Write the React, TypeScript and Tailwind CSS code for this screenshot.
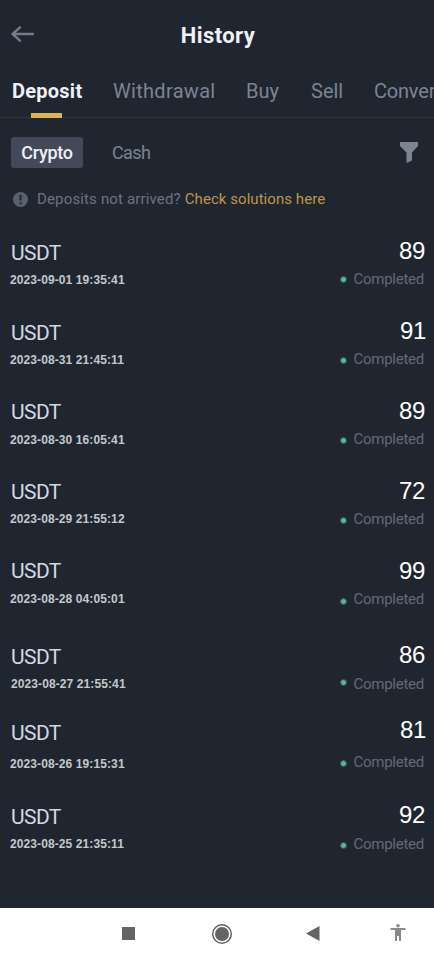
import clsx from 'clsx';

interface Deposit {
  date: string;
  amount: string;
  row: string;
  dateGap: string;
  amountPad: string;
  statusGap: string;
  dot: string;
}

const deposits: Deposit[] = [
  { date: '2023-09-01 19:35:41', amount: '89', row: 'h-[80px]', dateGap: 'mt-[7px]', amountPad: 'pt-[1px]', statusGap: 'mt-[6px]', dot: 'mt-[1px]' },
  { date: '2023-08-31 21:45:11', amount: '91', row: 'h-[79px]', dateGap: 'mt-[7px]', amountPad: 'pt-[1px] -mr-px', statusGap: 'mt-[6px] mr-px', dot: 'mt-[2px]' },
  { date: '2023-08-30 16:05:41', amount: '89', row: 'h-[80px]', dateGap: 'mt-[8px]', amountPad: 'pt-[2px]', statusGap: 'mt-[6px]', dot: 'mt-[2px]' },
  { date: '2023-08-29 21:55:12', amount: '72', row: 'h-[79px]', dateGap: 'mt-[7px]', amountPad: 'pt-[2px]', statusGap: 'mt-[6px]', dot: 'mt-[2px]' },
  { date: '2023-08-28 04:05:01', amount: '99', row: 'h-[86px]', dateGap: 'mt-[8px]', amountPad: 'pt-[3px]', statusGap: 'mt-[6px]', dot: 'mt-[4px]' },
  { date: '2023-08-27 21:55:41', amount: '86', row: 'h-[76px]', dateGap: 'mt-[7px] ml-px', amountPad: 'pt-[1px]', statusGap: 'mt-[7px]', dot: '-mt-[3px]' },
  { date: '2023-08-26 19:15:31', amount: '81', row: 'h-[84px]', dateGap: 'mt-[11px]', amountPad: 'pt-0 -mr-px', statusGap: 'mt-[10px] mr-px', dot: 'mt-[3px]' },
  { date: '2023-08-25 21:35:11', amount: '92', row: 'h-[108px]', dateGap: 'mt-[7px]', amountPad: 'pt-[1px]', statusGap: 'mt-[7px]', dot: 'mt-[2px]' },
];

const tabs = [
  { label: 'Deposit', className: 'w-[101px] font-bold text-[#eff1f6] tracking-[0.25px]' },
  { label: 'Withdrawal', className: 'w-[133px] text-[#7c8494] tracking-[0.3px]' },
  { label: 'Buy', className: 'w-[65px] text-[#7c8494]' },
  { label: 'Sell', className: 'w-[63px] text-[#7c8494]' },
  { label: 'Conver', className: 'text-[#7c8494] -tracking-[0.2px]' },
];

function DepositRow({ deposit }: { deposit: Deposit }) {
  return (
    <div className={clsx('flex justify-between px-[10px]', deposit.row)}>
      <div className="flex flex-col pt-[5px]">
        <span className="ml-px text-[21px] leading-6 tracking-[-0.6px] text-[#d3d7e4]">USDT</span>
        <span
          className={clsx(
            '[font-family:Liberation_Sans,Arial,sans-serif] text-[12px] leading-4 font-bold tracking-[0.1px] whitespace-nowrap text-[#c3c8cb]',
            deposit.dateGap
          )}
        >
          {deposit.date}
        </span>
      </div>
      <div className={clsx('flex flex-col items-end', deposit.amountPad)}>
        <span className="-mr-px [font-family:Liberation_Sans,Arial,sans-serif] text-[24px] leading-7 tracking-[-0.4px] text-white">
          {deposit.amount}
        </span>
        <div className={clsx('flex h-4 items-center gap-[6px]', deposit.statusGap)}>
          <span className={clsx('size-[7px] rounded-full border border-[#245c50] bg-[#66ac9c]', deposit.dot)} />
          <span className="text-[15px] leading-4 tracking-[-0.25px] text-[#626976]">Completed</span>
        </div>
      </div>
    </div>
  );
}

export default function App() {
  return (
    <div className="flex h-[959px] w-[434px] flex-col overflow-hidden bg-[#202630] font-[Roboto,sans-serif]">
      <header className="grid h-[70px] grid-cols-[1fr_auto_1fr] items-center pl-[10px] pr-[8px]">
        <svg width="24" height="18" viewBox="0 0 24 18" fill="none" stroke="#757c89" strokeWidth="2.4" strokeLinecap="round" strokeLinejoin="round" className="-mt-[3px]">
          <path d="M10 2.300 2.600 9l7.400 6.700M3 9h20" />
        </svg>
        <h1 className="pt-px text-[22px] leading-7 font-bold tracking-[0.4px] text-[#eff1f6]">History</h1>
      </header>

      <nav className="flex h-[48px] shrink-0 flex-col justify-between border-b border-[#2c3440] pl-[11px]">
        <div className="ml-px flex pt-[9px] text-[20px] leading-6 whitespace-nowrap">
          {tabs.map((tab) => (
            <span key={tab.label} className={clsx('shrink-0', tab.className)}>
              {tab.label}
            </span>
          ))}
        </div>
        <div className="-mb-px ml-5 h-[5px] w-[31px] bg-[#dcb455]" />
      </nav>

      <div className="flex h-[68px] items-center pr-[16px] pl-[11px]">
        <button className="h-[31px] w-[72px] rounded-[3px] bg-[#434958] pt-px text-[18px] font-medium tracking-[-0.3px] text-[#eff1f6]">
          Crypto
        </button>
        <span className="ml-[29px] pt-px text-[18px] tracking-[-0.6px] text-[#7c8494]">Cash</span>
        <svg width="18" height="21" viewBox="0 0 18 21" fill="#7c8494" className="ml-auto">
          <path d="M0 0h18v4l-6 6.5v8L6.5 21V10.500L0 4z" />
        </svg>
      </div>

      <div className="flex h-[26px] items-center pl-[13px] text-[15px] whitespace-nowrap text-[#6c7380]">
        <svg width="15" height="15" viewBox="0 0 15 15" className="mr-[9px]">
          <circle cx="7.5" cy="7.5" r="7.5" fill="#596070" />
          <path d="M7.5 3v5.5M7.5 10.2v2" stroke="#202630" strokeWidth="2" />
        </svg>
        <span className="tracking-[0.15px]">Deposits not arrived?</span>
        <a className="ml-[4px] tracking-[0.05px] text-[#bf9549]">Check solutions here</a>
      </div>

      <main className="flex flex-1 flex-col pt-[24px]">
        {deposits.map((deposit) => (
          <DepositRow key={deposit.date} deposit={deposit} />
        ))}
      </main>

      <footer className="flex h-[51px] shrink-0 items-center bg-white pl-[122px]">
        <div className="size-[13px] bg-[#646464]" />
        <svg width="22" height="22" viewBox="0 0 22 22" className="ml-[76px]">
          <circle cx="11" cy="11" r="9.3" fill="none" stroke="#646464" strokeWidth="1.5" />
          <circle cx="11" cy="11" r="7" fill="#646464" />
        </svg>
        <svg width="14" height="15" viewBox="0 0 14 15" fill="#646464" className="ml-[73px]">
          <path d="M13.5 0v15L0 7.5z" />
        </svg>
        <svg width="16" height="17" viewBox="0 0 16 17" fill="#8a8a8a" className="-mt-[2px] ml-[70px]">
          <circle cx="8" cy="1.8" r="1.8" />
          <path d="M.5 4h15v2H11v11H9v-5H7v5H5V6H.5z" />
        </svg>
      </footer>
    </div>
  );
}
